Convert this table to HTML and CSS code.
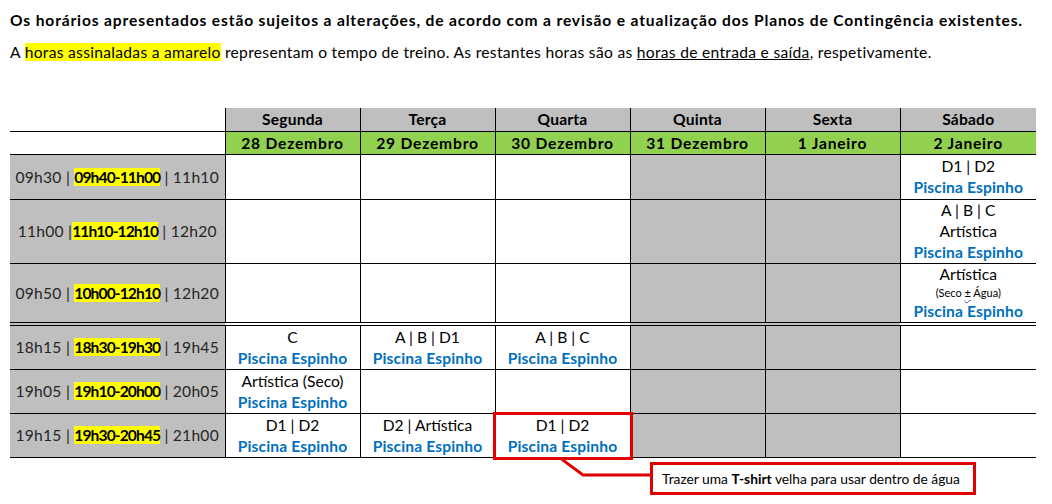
FILE: index.html
```html
<!DOCTYPE html>
<html lang="pt">
<head>
<meta charset="utf-8">
<title>Horários</title>
<link rel="stylesheet" href="styles.css">
</head>
<body>
<div class="page">
  <p class="title">Os horários apresentados estão sujeitos a alterações, de acordo com a revisão e atualização dos Planos de Contingência existentes.</p>
  <p class="intro">A <span class="hl">horas assinaladas a amarelo</span> representam o tempo de treino. As restantes horas são as <u>horas de entrada e saída</u>, respetivamente.</p>

  <div class="schedule">
    <table class="grid">
      <colgroup>
        <col class="c-time"><col class="c-day"><col class="c-day"><col class="c-day"><col class="c-day"><col class="c-day"><col class="c-last">
      </colgroup>
      <tr class="r-days">
        <td class="blank"></td>
        <th>Segunda</th><th>Terça</th><th>Quarta</th><th>Quinta</th><th>Sexta</th><th>Sábado</th>
      </tr>
      <tr class="r-dates">
        <td class="blank"></td>
        <th>28 Dezembro</th><th>29 Dezembro</th><th>30 Dezembro</th><th>31 Dezembro</th><th>1 Janeiro</th><th>2 Janeiro</th>
      </tr>
      <tr class="r1">
        <td class="time">09h30 | <b class="hl">09h40-11h00</b> | 11h10</td>
        <td></td><td></td><td></td><td class="off"></td><td class="off"></td>
        <td>D1 | D2<br><span class="pool">Piscina Espinho</span></td>
      </tr>
      <tr class="r2">
        <td class="time">11h00 |<b class="hl">11h10-12h10</b> | 12h20</td>
        <td></td><td></td><td></td><td class="off"></td><td class="off"></td>
        <td>A | B | C<br>Artística<br><span class="pool">Piscina Espinho</span></td>
      </tr>
      <tr class="r3">
        <td class="time">09h50 | <b class="hl">10h00-12h10</b> | 12h20</td>
        <td></td><td></td><td></td><td class="off"></td><td class="off"></td>
        <td><span class="line">Artística</span><span class="small">(Seco <span class="spell">±</span> Água)</span><span class="line pool">Piscina Espinho</span></td>
      </tr>
      <tr class="r4 sep">
        <td class="time">18h15 | <b class="hl">18h30-19h30</b> | 19h45</td>
        <td>C<br><span class="pool">Piscina Espinho</span></td>
        <td>A | B | D1<br><span class="pool">Piscina Espinho</span></td>
        <td>A | B | C<br><span class="pool">Piscina Espinho</span></td>
        <td class="off"></td><td class="off"></td><td></td>
      </tr>
      <tr class="r5">
        <td class="time">19h05 | <b class="hl">19h10-20h00</b> | 20h05</td>
        <td>Artística (Seco)<br><span class="pool">Piscina Espinho</span></td>
        <td></td><td></td>
        <td class="off"></td><td class="off"></td><td></td>
      </tr>
      <tr class="r6">
        <td class="time">19h15 | <b class="hl">19h30-20h45</b> | 21h00</td>
        <td>D1 | D2<br><span class="pool">Piscina Espinho</span></td>
        <td>D2 | Artística<br><span class="pool">Piscina Espinho</span></td>
        <td class="marked">D1 | D2<br><span class="pool">Piscina Espinho</span></td>
        <td class="off"></td><td class="off"></td><td></td>
      </tr>
    </table>

    <svg class="connector" width="100" height="24" viewBox="0 0 100 24" aria-hidden="true">
      <polyline points="0,0 23,17 95,17" fill="none" stroke="#e00000" stroke-width="3"/>
    </svg>
    <div class="callout">Trazer uma <b>T-shirt</b> velha para usar dentro de água</div>
  </div>
</div>
</body>
</html>
```

FILE: styles.css
```css
html, body {
  margin: 0;
  padding: 0;
  background: #ffffff;
  min-height: 504px;
}

body {
  font-family: Lato, "Liberation Sans", Arial, sans-serif;
  color: #000000;
}

.page {
  padding: 11px 0 46px 10px;
}

.title {
  margin: 0;
  font-size: 15.6px;
  line-height: 19px;
  font-weight: bold;
  letter-spacing: 0.85px;
  white-space: nowrap;
}

.intro {
  margin: 13px 0 0 0;
  font-size: 15.6px;
  line-height: 19px;
  letter-spacing: 0.3px;
  white-space: nowrap;
}

.hl {
  background: #ffff00;
}

.schedule {
  position: relative;
  margin-top: 46px;
  width: 1026px;
}

.grid {
  border-collapse: collapse;
  table-layout: fixed;
  width: 1026px;
  font-size: 15.6px;
  line-height: 21px;
}

.c-time { width: 215px; }
.c-day { width: 135px; }
.c-last { width: 136px; }

.grid td,
.grid th {
  padding: 0;
  text-align: center;
  vertical-align: middle;
  border: 1px solid #000000;
}

.grid td:first-child { border-left: none; }
.grid td:last-child,
.grid th:last-child { border-right: none; }

.grid .blank {
  border: none;
  border-bottom: 1px solid #000000;
  background: #ffffff;
}

.r-days th {
  border-top: none;
  background: #bfbfbf;
  height: 23px;
  font-weight: bold;
  letter-spacing: 0.2px;
}

.r-dates th {
  background: #92d050;
  height: 22px;
  font-weight: bold;
  letter-spacing: 0.8px;
}

.r1 td { height: 44px; }
.r2 td { height: 63px; }
.r3 td { height: 57px; }
.r4 td, .r5 td, .r6 td { height: 43px; }

.sep td { border-top: 4px double #000000; }

.time {
  background: #bfbfbf;
  color: #262626;
  letter-spacing: 0.25px;
}

.time b {
  color: #000000;
  letter-spacing: -0.9px;
}

.off {
  background: #bfbfbf;
}

.pool {
  color: #0070c0;
  font-weight: bold;
  letter-spacing: 0.15px;
}

.line {
  display: block;
  line-height: 21px;
}

.small {
  display: block;
  font-size: 11px;
  line-height: 16px;
}

.spell {
  text-decoration: underline wavy #3a52c4;
  text-decoration-thickness: 1px;
  text-underline-offset: 2px;
}

.marked {
  position: relative;
}

.marked::after {
  content: "";
  position: absolute;
  left: -3px;
  top: -2px;
  right: -3px;
  bottom: -3px;
  border: 3px solid #e00000;
  pointer-events: none;
}

.connector {
  position: absolute;
  left: 550px;
  top: 350px;
}

.callout {
  position: absolute;
  left: 640px;
  top: 354px;
  width: 311px;
  height: 27px;
  border: 3px solid #e00000;
  background: #ffffff;
  font-size: 13.8px;
  line-height: 27px;
  padding-left: 9px;
  box-sizing: content-box;
  white-space: nowrap;
}
```
